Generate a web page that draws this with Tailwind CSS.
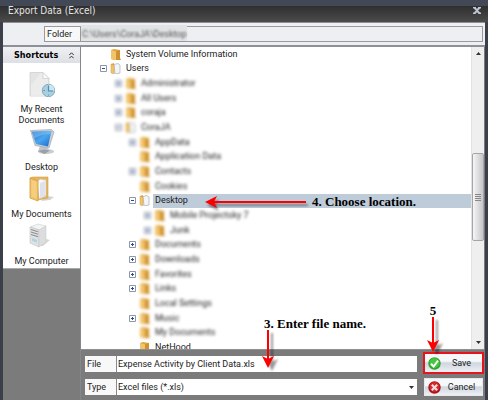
<!DOCTYPE html>
<html lang="en">
<head>
    <meta charset="UTF-8">
    <meta name="viewport" content="width=device-width, initial-scale=1.0">
    <title>Export Data (Excel)</title>
    <script src="https://cdn.jsdelivr.net/npm/@tailwindcss/browser@4"></script>
</head>
<body class="bg-[#7b7b7b] font-['Roboto','DejaVu_Sans',sans-serif] text-[9px] leading-[11px] text-[#222]">
    <div class="relative flex flex-col min-h-screen border-l-3 border-r-3 border-[#3b3f4a]">
        <!-- Title bar -->
        <header class="flex items-center justify-between h-[22px] -mx-[3px] pl-2 pr-[7px] border-t-6 border-[#434857] bg-linear-to-b from-[#2f2f2f] to-[#4b4b4b] text-[#e4e4e4]">
            <h1 class="text-[10px] leading-[14px] font-['DejaVu_Sans_Condensed','DejaVu_Sans',sans-serif] -mt-[6px]">Export Data (Excel)</h1>
            <button aria-label="Close" class="-mt-2">
                <svg class="w-2 h-[7px]" viewBox="0 0 8 7" fill="none" stroke="#bcc6d2" stroke-width="2"><path d="M1.5.5l5 6M6.5.5l-5 6M0 .5h3M5 .5h3M0 6.5h3M5 6.5h3"/></svg>
            </button>
        </header>

        <!-- Folder bar -->
        <div class="flex items-center h-[25px] pl-[41px] pr-[2px] bg-[#eeeff2] border-t border-b-2 border-t-[#8a8e99] border-b-[#8e9099]">
            <label for="folder" class="flex items-center w-[37px] h-4 pl-[2px] bg-[#f8f8f8] border border-[#9a9a9d]">Folder</label>
            <div class="relative flex-1 h-4 border border-l-0 border-[#9a9a9d]">
                <div class="absolute -top-[2px] left-0 w-[106px] h-4 bg-[#e2e3e5]"></div>
                <input id="folder" type="text" readonly value="C:\Users\CoraJA\Desktop" class="absolute inset-0 w-full pl-px text-[#555] blur-[1px] outline-none">
            </div>
        </div>

        <!-- Body -->
        <div class="flex flex-1">
            <!-- Shortcuts -->
            <aside class="w-[77px] shrink-0">
                <div class="flex items-center justify-between h-4 pl-[11px] pr-[6px] bg-linear-to-b from-[#f0f1f3] to-[#dcdfe4] font-['DejaVu_Sans_Condensed','DejaVu_Sans',sans-serif] font-bold text-black">
                    <h2>Shortcuts</h2>
                    <svg class="w-[5px] h-[7px]" viewBox="0 0 5 7" fill="none" stroke="#333"><path d="M.3 3l2.200-2.200 2.200 2.200M.3 6.300l2.200-2.200 2.200 2.200"/></svg>
                </div>
                <nav class="flex flex-col gap-[3px] pt-2 pb-px bg-white border-b border-[#aaa] text-center">
                    <a href="#" class="flex flex-col items-center gap-[7px]">
                        <svg class="w-[26px] h-[26px]" viewBox="0 0 26 26">
                            <path d="M1 1.500h13l6 6V25H1z" fill="#e3e4e5" stroke="#cfd0d2" stroke-width=".8"/>
                            <path d="M2 25V14L12 2h2l5 6v17z" fill="#efefef" opacity=".7"/>
                            <path d="M14 1.500v6h6z" fill="#fafafa" stroke="#c4c5c7" stroke-width=".6"/>
                            <circle cx="19.500" cy="19.500" r="6.200" fill="#a9d0e0" stroke="#7ca5b8" stroke-width=".9"/>
                            <path d="M19.500 13.500a6 6 0 0 1 6 6h-6z" fill="#cbe6ef"/>
                            <path d="M19.500 14.500v5.500h4.500" fill="none" stroke="#4b8eae" stroke-width="1.200"/>
                            <path d="M14.500 19.500h1.500M19.500 24.500v-1" stroke="#5d8fa8"/>
                        </svg>
                        <span>My Recent<br>Documents</span>
                    </a>
                    <a href="#" class="flex flex-col items-center gap-[7px]">
                        <svg class="w-[26px] h-[26px]" viewBox="0 0 26 26">
                            <defs>
                                <linearGradient id="screen" x1="0" y1="0" x2="1" y2="1"><stop offset="0" stop-color="#1766c9"/><stop offset=".5" stop-color="#4ca7ee"/><stop offset="1" stop-color="#1768cc"/></linearGradient>
                            </defs>
                            <ellipse cx="17" cy="22.500" rx="8" ry="2.500" fill="#ccc"/>
                            <path d="M11 17l7 1 2 4-5 2.500-6-2z" fill="#c2c6ca"/>
                            <path d="M9 22l6-1.500 6 1-5.500 3.500z" fill="#9aa0a6"/>
                            <path d="M1.500 1.500L22.500.500 25 3 20 19 6 16.500z" fill="#c9cdd2" stroke="#9ca3ab" stroke-width=".6"/>
                            <path d="M2.800 2.800L22.500 2 19 17.500 7 15z" fill="url(#screen)"/>
                            <path d="M2.800 2.800L22.500 2l-.7 3C15 5 9 7 5 9.500z" fill="#8cc8f7" opacity=".5"/>
                        </svg>
                        Desktop
                    </a>
                    <a href="#" class="flex flex-col items-center gap-[7px]">
                        <svg class="w-[26px] h-[26px]" viewBox="0 0 26 26">
                            <path d="M17 20l8 1-4 3-9 1z" fill="#d3d3d3"/>
                            <path d="M1 2l3-1h15v21L9 24z" fill="#e9b55a" stroke="#d59a37" stroke-width=".6"/>
                            <path d="M8 6l3-3 6 1v16l-7 3z" fill="#f7f8fa" stroke="#b9bec6" stroke-width=".6"/>
                            <path d="M11 7l5-2v15l-5 2z" fill="#dfe3e9"/>
                            <path d="M1 2l8 3v20l-8-3z" fill="#f2c66e" stroke="#d59a37" stroke-width=".8"/>
                            <path d="M2.500 4l5 2v16l-5-2z" fill="#f6d48c" opacity=".6"/>
                        </svg>
                        My Documents
                    </a>
                    <a href="#" class="flex flex-col items-center gap-[7px]">
                        <svg class="w-[26px] h-[26px]" viewBox="0 0 26 26">
                            <path d="M11 23l6-7 4 1-7 6z" fill="#d9d9d9"/>
                            <path d="M1 4l8-3 8 2-6 4z" fill="#f4f4f4" stroke="#c5c5c5" stroke-width=".5"/>
                            <path d="M1 4l9 3v17l-9-4z" fill="#e2e2e2" stroke="#b5b5b5" stroke-width=".5"/>
                            <path d="M10 7l7-4v16l-7 5z" fill="#dcddde" stroke="#c5c5c5" stroke-width=".5"/>
                            <path d="M2 6.500l7 2.300M2 9l7 2.300M2 11.500l7 2.300" stroke="#8d8f91" stroke-width="1.200"/>
                            <path d="M3 15l5 1.700v3l-5-2z" fill="#a9d6e6"/>
                        </svg>
                        My Computer
                    </a>
                </nav>
            </aside>

            <main class="flex flex-col flex-1 min-w-0 pr-px border-l border-[#85868f]">
                <!-- Folder tree -->
                <div class="flex flex-1 bg-white">
                    <div class="flex-1 h-[302px] overflow-hidden">
                        <ul id="tree" class="grid auto-rows-fr h-[308px]"></ul>
                    </div>
                    <!-- Scrollbar -->
                    <div class="relative flex flex-col items-center justify-between w-[13px] py-[5px] bg-[#efeff0] border-l border-[#e2e2e4]">
                        <svg class="w-[5px] h-[3px]" viewBox="0 0 5 3"><path d="M0 3L2.500 0 5 3z" fill="#333"/></svg>
                        <div class="absolute top-[106px] inset-x-0 flex flex-col items-center justify-center gap-px h-[88px] rounded-[2px] border border-[#a5a5a8] bg-linear-to-r from-[#f6f6f6] to-[#c6c6ca]">
                            <i class="w-[6px] h-px bg-[#888]"></i>
                            <i class="w-[6px] h-px bg-[#888]"></i>
                            <i class="w-[6px] h-px bg-[#888]"></i>
                            <i class="w-[6px] h-px bg-[#888]"></i>
                        </div>
                        <svg class="w-[5px] h-[3px]" viewBox="0 0 5 3"><path d="M0 0l2.500 3L5 0z" fill="#333"/></svg>
                    </div>
                </div>

                <!-- File name, type and buttons -->
                <form class="flex gap-[6px] pl-1 pt-[2px] pb-1 border-t border-[#8f8f8f]">
                    <div class="flex flex-col flex-1 gap-[7px] pt-1">
                        <div class="flex h-4">
                            <label for="file" class="flex items-center w-8 pl-[2px] bg-[#f8f8f8] border-r border-[#8a8a8a]">File</label>
                            <input id="file" type="text" value="Expense Activity by Client Data.xls" class="flex-1 min-w-0 pl-px bg-white outline-none">
                        </div>
                        <div class="relative flex h-4">
                            <label for="type" class="flex items-center w-8 pl-[2px] bg-[#f8f8f8] border-r border-[#8a8a8a]">Type</label>
                            <select id="type" class="flex-1 min-w-0 pl-px bg-white appearance-none outline-none">
                                <option>Excel files (*.xls)</option>
                            </select>
                            <svg class="absolute right-[3px] top-[7px] w-[5px] h-[3px]" viewBox="0 0 5 3"><path d="M0 0l2.500 3L5 0z" fill="#333"/></svg>
                        </div>
                    </div>
                    <div class="flex flex-col gap-[3px] w-[61px]">
                        <button type="button" class="flex items-center h-[22px] pl-[3px] border-2 border-[#e8141c] bg-linear-to-b from-[#f7f8fa] from-40% via-[#cfd6df] via-50% to-[#eef1f5]">
                            <svg class="w-[13px] h-[13px]" viewBox="0 0 13 13">
                                <circle cx="6.500" cy="6.500" r="6.200" fill="#2fa52f"/>
                                <circle cx="6.500" cy="6" r="5" fill="#46c53f"/>
                                <path d="M3 6.800l2.600 2.700L10 3.700" fill="none" stroke="#fff" stroke-width="2"/>
                            </svg>
                            <span class="flex-1 text-center">Save</span>
                        </button>
                        <button type="button" class="flex items-center h-[18px] mx-px mt-px pl-[3px] border border-[#e6e8ec] bg-linear-to-b from-[#f7f8fa] from-40% via-[#cfd6df] via-50% to-[#eef1f5]">
                            <svg class="w-[13px] h-[13px]" viewBox="0 0 13 13">
                                <circle cx="6.500" cy="6.500" r="6.200" fill="#a81418"/>
                                <circle cx="6.500" cy="6" r="5" fill="#d3292c"/>
                                <path d="M3.800 3.800l5.400 5.400M9.200 3.800L3.800 9.200" stroke="#f5dcdc" stroke-width="2.200"/>
                            </svg>
                            <span class="flex-1 text-center">Cancel</span>
                        </button>
                    </div>
                </form>
            </main>
        </div>

        <!-- Step callouts -->
        <div class="absolute top-[195px] right-[69px] flex items-center gap-[6px] font-['Liberation_Serif',serif] text-[13px] leading-[13px] font-bold text-black">
            <svg class="w-[101px] h-3 drop-shadow-[2px_3px_1px_#0006]" viewBox="0 0 101 12"><path d="M8 6h93" stroke="#f00" stroke-width="2"/><path d="M0 6L12 0 9 6l3 6z" fill="#f00"/></svg>
            4. Choose location.
        </div>
        <div class="absolute bottom-[32px] right-[119px] flex flex-col font-['Liberation_Serif',serif] text-[13px] leading-[13px] font-bold text-black">
            3. Enter file name.
            <svg class="w-3 h-[38px] -ml-[2px] drop-shadow-[4px_3px_1px_#0006]" viewBox="0 0 12 38"><path d="M6 0v30" stroke="#f00" stroke-width="2"/><path d="M6 38L0 26l6 3 6-3z" fill="#f00"/></svg>
        </div>
        <div class="absolute bottom-[48px] right-[46px] flex flex-col items-center font-['Liberation_Serif',serif] text-[13px] leading-[13px] font-bold text-black">
            5
            <svg class="w-3 h-[35px] drop-shadow-[4px_3px_1px_#0006]" viewBox="0 0 12 35"><path d="M6 0v28" stroke="#f00" stroke-width="2"/><path d="M6 35L0 23l6 3 6-3z" fill="#f00"/></svg>
        </div>
    </div>

    <script>
        // depth, toggle sign, name, style flags (o = open folder, b = blurred, t = clear toggle, s = selected)
        const folders = [
            [0, '', 'System Volume Information', ''],
            [0, '-', 'Users', 'o'],
            [1, '+', 'Administrator', 'b'],
            [1, '+', 'All Users', 'b'],
            [1, '+', 'coraja', 'b'],
            [1, '-', 'CoraJA', 'bo'],
            [2, '+', 'AppData', 'b'],
            [2, '', 'Application Data', 'b'],
            [2, '+', 'Contacts', 'b'],
            [2, '', 'Cookies', 'b'],
            [2, '-', 'Desktop', 'os'],
            [3, '+', 'Mobile Projectsky 7', 'b'],
            [3, '+', 'Junk', 'b'],
            [2, '+', 'Documents', 'bt'],
            [2, '+', 'Downloads', 'bt'],
            [2, '+', 'Favorites', 'bt'],
            [2, '+', 'Links', 'bt'],
            [2, '', 'Local Settings', 'b'],
            [2, '+', 'Music', 'bt'],
            [2, '', 'My Documents', 'b'],
            [2, '', 'NetHood', '']
        ];

        const indents = ['pl-[19px]', 'pl-[34px]', 'pl-[48px]', 'pl-[63px]'];

        const closedFolder = '<path d="M1 1l3-1 6 1v8l-6 2-3-1z" fill="#e0a63f"/><path d="M1 1l5 1.500V11L1 9.800z" fill="#f1c56c"/><path d="M6 2.500L10 1v8l1 2H6z" fill="#cf9230"/>';
        const openFolder = '<path d="M1 1l3-1v10l-3-1z" fill="#e0a63f"/><path d="M4 1.500L8 .5l2 1.500v8L5 11z" fill="#f4f5f7" stroke="#a9adb4" stroke-width=".7"/><path d="M1 1l3 1.500V11L1 9.800z" fill="#f1c56c" stroke="#d39a3c" stroke-width=".5"/>';

        document.getElementById('tree').innerHTML = folders.map(([depth, sign, name, flags]) => {
            const blurred = flags.includes('b');
            const soft = blurred ? 'blur-[1.5px]' : '';
            const softToggle = blurred && !flags.includes('t') ? 'blur-[1.5px]' : '';
            const box = sign
                ? `<button aria-label="Toggle ${name}" class="w-[7px] h-[7px] ${softToggle}">
                       <svg class="block w-[7px] h-[7px]" viewBox="0 0 7 7"><path d="M.5.5h6v6h-6z" fill="#fff" stroke="#8d97a8"/><path d="${sign === '+' ? 'M2 3.500h3M3.500 2v3' : 'M2 3.500h3'}" stroke="#2c4a9a"/></svg>
                   </button>`
                : '<span class="w-[7px]"></span>';
            return `<li class="flex items-center ${indents[depth]}">
                ${box}
                <svg class="w-[11px] h-[11px] ml-[3px] mr-[3px] ${soft}" viewBox="0 0 11 11">${flags.includes('o') ? openFolder : closedFolder}</svg>
                <span class="flex flex-1 items-center self-stretch pl-[2px] ${flags.includes('s') ? 'bg-[#becbd9]' : ''}"><span class="${soft}">${name}</span></span>
            </li>`;
        }).join('');
    </script>
</body>
</html>
